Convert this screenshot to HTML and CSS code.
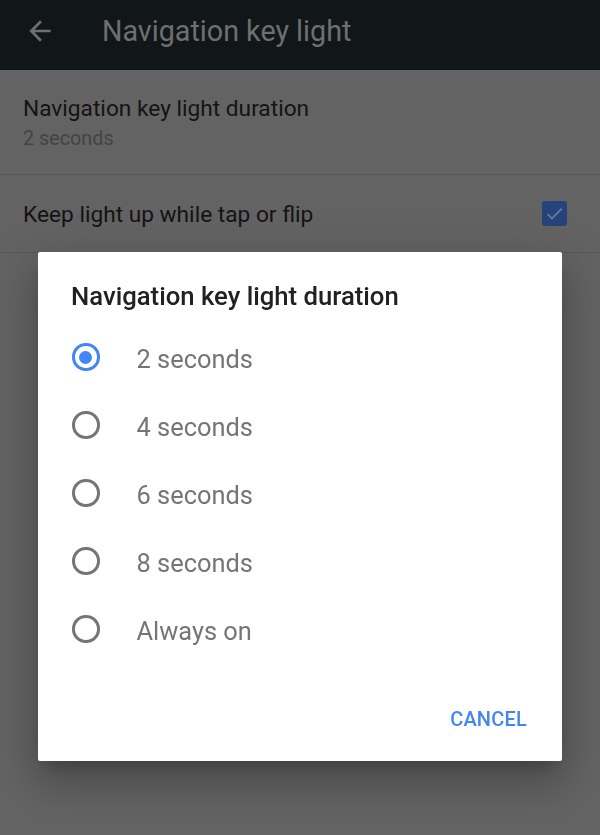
FILE: index.html
```html
<!DOCTYPE html>
<html lang="en">
<head>
    <meta charset="UTF-8">
    <meta name="viewport" content="width=device-width, initial-scale=1.0">
    <title>Navigation key light</title>
    <link rel="stylesheet" href="styles.css">
</head>
<body>
    <header class="app-bar">
        <svg class="back" viewBox="0 0 24 24">
            <path d="M20 11H7.83l5.59-5.59L12 4l-8 8 8 8 1.41-1.41L7.83 13H20v-2z" fill="currentColor"/>
        </svg>
        <h1>Navigation key light</h1>
    </header>

    <div class="pref-list">
        <div class="pref pref-duration">
            <div class="pref-title">Navigation key light duration</div>
            <div class="pref-summary">2 seconds</div>
        </div>
        <div class="pref pref-check">
            <div class="pref-title">Keep light up while tap or flip</div>
            <span class="checkbox">
                <svg width="21" height="21" viewBox="0 0 24 24">
                    <path d="M9 16.17L4.83 12l-1.42 1.41L9 19 21 7l-1.41-1.41z" fill="currentColor"/>
                </svg>
            </span>
        </div>
    </div>

    <div class="scrim">
        <div class="dialog">
            <h2>Navigation key light duration</h2>
            <ul class="choices">
                <li class="choice selected"><span class="radio"></span><span class="label">2 seconds</span></li>
                <li class="choice"><span class="radio"></span><span class="label">4 seconds</span></li>
                <li class="choice"><span class="radio"></span><span class="label">6 seconds</span></li>
                <li class="choice"><span class="radio"></span><span class="label">8 seconds</span></li>
                <li class="choice"><span class="radio"></span><span class="label">Always on</span></li>
            </ul>
            <div class="actions">
                <button>CANCEL</button>
            </div>
        </div>
    </div>
</body>
</html>
```

FILE: styles.css
```css
body {
    margin: 0;
    font-family: Roboto, 'Noto Sans', sans-serif;
    background-color: #636363;
    width: 600px;
    height: 835px;
    overflow: hidden;
}

.app-bar {
    height: 70px;
    box-sizing: border-box;
    padding-top: 14px;
    background-color: #111718;
    display: flex;
    align-items: flex-start;
    color: #6f6f6f;
}

.back {
    width: 32px;
    height: 32px;
    margin-left: 24px;
    margin-right: 46px;
    margin-top: 1px;
}

.app-bar h1 {
    margin: 0;
    font-size: 28.7px;
    line-height: 34px;
    font-weight: 400;
    color: #6f6f6f;
}

.pref {
    padding: 0 23px;
    border-bottom: 1px solid #575757;
    box-sizing: border-box;
}

.pref-title {
    font-size: 22.7px;
    line-height: 28px;
    color: #141414;
}

.pref-duration {
    height: 105px;
    padding-top: 25px;
}

.pref-summary {
    font-size: 19.8px;
    line-height: 24px;
    color: #434343;
    margin-top: 4px;
}

.pref-check {
    height: 78px;
    display: flex;
    align-items: center;
    justify-content: space-between;
    padding-right: 33px;
}

.pref-check .pref-title {
    padding-top: 3px;
}

.checkbox {
    width: 25px;
    height: 25px;
    border-radius: 3px;
    background-color: #28437b;
    color: #6c7a94;
    display: flex;
    align-items: center;
    justify-content: center;
}

.scrim {
    position: fixed;
    inset: 0;
    display: flex;
    justify-content: center;
    align-items: flex-start;
    padding-top: 252px;
}

.dialog {
    width: 524px;
    height: 509px;
    background-color: #fff;
    border-radius: 2px;
    box-shadow: 0 24px 38px 3px rgba(0, 0, 0, 0.14),
                0 9px 46px 8px rgba(0, 0, 0, 0.12),
                0 11px 15px -7px rgba(0, 0, 0, 0.2);
    box-sizing: border-box;
    padding-top: 28px;
}

.dialog h2 {
    margin: 0 0 0 33px;
    font-size: 25.7px;
    line-height: 32px;
    font-weight: 500;
    color: #212121;
}

.choices {
    list-style: none;
    margin: 11px 0 0;
    padding: 0;
}

.choice {
    height: 68px;
    display: flex;
    align-items: center;
    padding-left: 34px;
}

.label {
    font-size: 25.4px;
    color: #757575;
    padding-top: 4px;
}

.radio {
    width: 21.5px;
    height: 21.5px;
    border: 3px solid #757575;
    border-radius: 50%;
    margin-right: 37px;
    display: flex;
    align-items: center;
    justify-content: center;
}

.selected .radio {
    border-color: #4285f4;
}

.selected .radio::after {
    content: '';
    width: 13px;
    height: 13px;
    border-radius: 50%;
    background-color: #4285f4;
}

.actions {
    display: flex;
    justify-content: flex-end;
    padding: 44px 35px 0 0;
}

button {
    font-family: Roboto, sans-serif;
    font-size: 20px;
    line-height: 24px;
    font-weight: 500;
    letter-spacing: 0.2px;
    color: #4285f4;
    background: none;
    border: none;
    padding: 0;
}
```
